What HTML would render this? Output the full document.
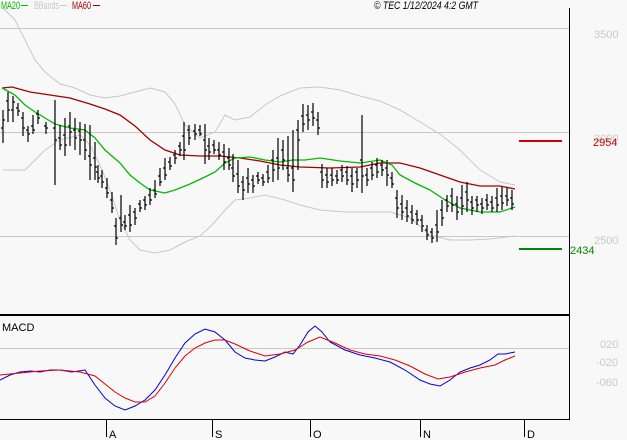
<!DOCTYPE html>
<html><head><meta charset="utf-8"><style>
html,body{margin:0;padding:0;background:#f8f8f8;width:627px;height:440px;overflow:hidden}
svg{display:block}
text{font-family:"Liberation Sans",sans-serif;font-size:11px}
</style></head><body>
<svg width="627" height="440" viewBox="0 0 627 440">
<rect width="627" height="440" fill="#f8f8f8"/>
<g stroke="#c8c8c8" stroke-width="1">
<line x1="0" y1="28.5" x2="569" y2="28.5"/>
<line x1="0" y1="132.5" x2="569" y2="132.5"/>
<line x1="0" y1="236.5" x2="569" y2="236.5"/>
<line x1="0" y1="348.5" x2="569" y2="348.5"/>
</g>
<g stroke="#000" fill="none">
<line x1="569.5" y1="8" x2="569.5" y2="420"/>
<line x1="0" y1="315" x2="570" y2="315" stroke-width="2"/>
<line x1="0" y1="419.5" x2="570" y2="419.5"/>
<line x1="106.5" y1="420" x2="106.5" y2="437"/>
<line x1="212.5" y1="420" x2="212.5" y2="437"/>
<line x1="310.5" y1="420" x2="310.5" y2="437"/>
<line x1="420.5" y1="420" x2="420.5" y2="437"/>
<line x1="524.5" y1="420" x2="524.5" y2="437"/>
</g>
<text x="109" y="438">A</text><text x="215" y="438">S</text><text x="313" y="438">O</text><text x="423" y="438">N</text><text x="527" y="438">D</text>
<g stroke="#c8c8c8" fill="none">
<polyline points="3,8 15,20 25,40 35,60 45,72 60,84 75,88 90,95 105,98 120,96 135,92 150,88 165,92 175,104 185,125 200,138 215,132 225,115 235,120 250,117 265,105 280,96 300,88 320,87 340,90 360,96 380,101 400,110 420,122 440,134 460,150 480,170 500,182 515,185"/>
<polyline points="3,170 25,170 35,160 45,150 60,140 80,135 90,145 100,165 110,190 120,220 130,240 140,250 155,253 170,250 185,242 200,236 212,225 225,210 235,200 250,198 265,195 285,200 300,205 320,210 345,212 370,212 390,212 410,218 430,235 450,240 470,240 490,239 515,236"/>
</g>
<polyline fill="none" stroke="#a00000" stroke-width="1.3" points="2,88 12,87 30,92 50,95 70,98 90,104 105,109 120,115 135,126 150,140 165,150 180,155 200,156 220,156 240,158 260,161 280,165 300,167 330,168 360,167 380,163 400,163 420,168 440,175 460,182 480,186 500,186 515,189"/>
<polyline fill="none" stroke="#00bb00" stroke-width="1.3" points="2,88 15,95 25,105 35,112 45,118 55,124 70,128 85,130 95,138 105,150 120,163 130,175 140,183 150,190 165,193 175,190 190,184 205,177 215,172 225,163 235,158 250,157 265,160 280,162 293,160 305,160 320,158 340,161 360,163 380,160 392,165 400,175 415,183 430,190 445,200 460,208 480,212 500,212 515,207"/>
<g stroke="#000" stroke-width="1.2" fill="none">
<path d="M3 110V143M1 128H3M3 120H5M8 92V122M6 101H8M8 110H10M13 96V122M11 110H13M13 102H15M18 103V116M16 108H18M18 111H20M23 112V136M21 118H23M23 128H25M28 126V142M26 130H28M28 134H30M33 115V134M31 126H33M33 130H35M38 110V124M36 114H38M38 118H40M46 122V134M44 126H46M46 128H48M55 100V185M53 128H55M55 140H57M60 125V150M58 138H60M60 145H62M65 118V156M63 135H65M65 145H67M70 112V146M68 126H70M70 132H72M75 118V150M73 130H75M75 138H77M80 122V155M78 131H80M80 140H82M85 124V160M83 140H85M85 150H87M90 125V180M88 156H90M90 165H92M95 142V180M93 158H95M95 167H97M98 165V183M96 172H98M98 178H100M102 170V188M100 176H102M102 182H104M107 178V198M105 188H107M107 193H109M112 192V213M110 200H112M112 208H114M116 218V245M114 226H116M116 238H118M121 195V232M119 218H121M121 225H123M125 215V230M123 222H125M125 226H127M130 205V232M128 215H130M130 225H132M135 208V225M133 212H135M135 218H137M140 200V212M138 204H140M140 208H142M145 196V210M143 200H145M145 205H147M150 188V205M148 195H150M150 200H152M155 180V198M153 190H155M155 194H157M160 168V186M158 176H160M160 182H162M165 158V180M163 168H165M165 175H167M170 157V170M168 162H170M170 166H172M175 150V164M173 155H175M175 158H177M180 142V156M178 146H180M180 150H182M184 122V160M182 136H184M184 150H186M189 125V145M187 130H189M189 138H191M195 124V140M193 131H195M195 134H197M200 125V136M198 130H200M200 134H202M205 124V164M203 140H205M205 150H207M209 138V160M207 146H209M209 152H211M214 140V154M212 145H214M214 150H216M219 142V160M217 150H219M219 155H221M224 144V170M222 152H224M224 162H226M229 148V170M227 158H229M229 165H231M233 154V182M231 168H233M233 176H235M238 160V193M236 174H238M238 186H240M243 176V200M241 182H243M243 190H245M248 168V193M246 178H248M248 184H250M253 175V193M251 180H253M253 186H255M258 172V184M256 176H258M258 180H260M263 174V186M261 178H263M263 182H265M268 165V183M266 172H268M268 178H270M273 150V182M271 160H273M273 170H275M278 138V180M276 158H278M278 168H280M283 140V170M281 150H283M283 160H285M288 136V182M286 168H288M288 175H290M293 130V192M291 168H293M293 180H295M298 120V170M296 130H298M298 140H300M303 104V132M301 116H303M303 124H305M308 105V130M306 115H308M308 120H310M313 103V126M311 112H313M313 118H315M318 112V135M316 120H318M318 128H320M322 164V188M320 172H322M322 180H324M327 168V188M325 175H327M327 182H329M332 168V186M330 175H332M332 180H334M337 170V184M335 176H337M337 180H339M342 165V182M340 170H342M342 176H344M347 166V185M345 172H347M347 180H349M352 168V192M350 176H352M352 184H354M357 168V188M355 172H357M357 180H359M362 115V193M360 160H362M362 176H364M367 168V186M365 175H367M367 180H369M372 162V180M370 168H372M372 175H374M377 158V178M375 165H377M377 172H379M382 160V176M380 165H382M382 170H384M387 160V186M385 168H387M387 175H389M392 172V188M390 178H392M392 184H394M397 190V218M395 198H397M397 208H399M402 195V220M400 204H402M402 212H404M407 200V222M405 208H407M407 216H409M412 205V224M410 212H412M412 220H414M417 210V225M415 214H417M417 220H419M422 215V232M420 220H422M422 226H424M427 225V240M425 230H427M427 235H429M432 228V243M430 232H432M432 238H434M437 210V242M435 225H437M437 232H439M442 200V226M440 210H442M442 218H444M447 195V212M445 200H447M447 206H449M452 188V212M450 196H452M452 205H454M457 196V220M455 204H457M457 212H459M462 185V215M460 198H462M462 206H464M467 182V212M465 192H467M467 200H469M472 196V215M470 202H472M472 208H474M477 196V212M475 200H477M477 205H479M482 198V214M480 204H482M482 208H484M487 194V210M485 200H487M487 205H489M492 196V212M490 202H492M492 208H494M497 188V212M495 198H497M497 205H499M502 187V210M500 196H502M502 203H504M507 188V206M505 196H507M507 200H509M512 190V210M510 198H512M512 204H514"/>
</g>
<polyline fill="none" stroke="#0000dd" points="0,380 10,375 20,372 30,371 40,372 50,370 60,370 72,372 85,370 95,385 105,398 115,406 125,410 135,406 145,400 155,390 165,375 175,358 185,343 195,334 205,329 215,332 225,340 235,352 245,358 255,360 265,361 275,357 285,352 293,354 300,345 308,332 315,326 322,332 330,342 345,350 360,355 375,358 390,362 405,370 420,380 430,384 440,386 450,380 460,372 470,368 480,365 490,360 498,354 505,354 515,352"/>
<polyline fill="none" stroke="#dd0000" points="0,375 20,373 40,371 60,370 80,372 95,376 105,384 115,392 125,398 135,402 145,402 155,396 165,383 175,368 185,356 195,348 205,343 215,340 225,340 235,344 250,351 265,356 280,354 295,350 308,342 320,337 335,343 350,350 365,354 380,356 395,360 410,366 425,374 438,379 450,377 465,372 480,368 495,365 505,360 515,356"/>
<line x1="519" y1="141" x2="562" y2="141" stroke="#cc0000" stroke-width="2"/>
<line x1="519" y1="249" x2="562" y2="249" stroke="#008800" stroke-width="2"/>
<g fill="#c8c8c8">
<text x="594" y="38">3500</text>
<text x="594" y="142">3000</text>
<text x="594" y="244">2500</text>
<text x="600" y="348">020</text>
<text x="596" y="366">-020</text>
<text x="596" y="386">-060</text>
</g>
<text x="593" y="146" fill="#cc0000">2954</text>
<text x="570" y="254" fill="#008800">2434</text>
<text x="1" y="9" fill="#00bb00" font-size="10" textLength="19" lengthAdjust="spacingAndGlyphs">MA20</text>
<line x1="21" y1="5.5" x2="28" y2="5.5" stroke="#00bb00"/>
<text x="34" y="9" fill="#c8c8c8" font-size="10" textLength="25" lengthAdjust="spacingAndGlyphs">BBands</text>
<line x1="60" y1="5.5" x2="67" y2="5.5" stroke="#c8c8c8"/>
<text x="72" y="9" fill="#a00000" font-size="10" textLength="19" lengthAdjust="spacingAndGlyphs">MA60</text>
<line x1="93" y1="5.5" x2="100" y2="5.5" stroke="#a00000"/>
<text x="374" y="9" fill="#000" font-size="10" font-style="italic" textLength="104" lengthAdjust="spacingAndGlyphs">© TEC 1/12/2024 4:2 GMT</text>
<text x="2" y="331" fill="#000" font-size="10">MACD</text>
</svg>
</body></html>
